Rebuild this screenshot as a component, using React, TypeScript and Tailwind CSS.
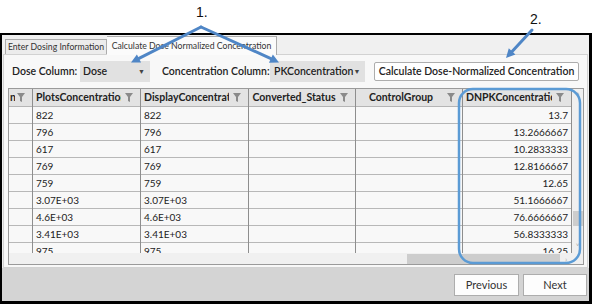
import React from "react";

const Funnel = () => (
  <svg width="8" height="9" viewBox="0 0 8 9" className="shrink-0">
    <path d="M0 0 H8 L5 4 V9 L3 8 V4 Z" fill="#8a8a8a" />
  </svg>
);

const rowsA = ["822", "796", "617", "769", "759", "3.07E+03", "4.6E+03", "3.41E+03", "975"];
const rowsB = ["13.7", "13.2666667", "10.2833333", "12.8166667", "12.65", "51.1666667", "76.6666667", "56.8333333", "16.25"];

const cols = [
  { w: "w-[24px]", label: "n", center: false },
  { w: "w-[108px]", label: "PlotsConcentration", center: false },
  { w: "w-[108px]", label: "DisplayConcentration", center: false },
  { w: "w-[107px]", label: "Converted_Status", center: true },
  { w: "w-[107px]", label: "ControlGroup", center: true },
  { w: "w-[109px]", label: "DNPKConcentration", center: false },
];

export default function App() {
  return (
    <div className="relative w-[592px] h-[304px] bg-white overflow-hidden font-['Lato',sans-serif] text-[#222]">
      <div className="h-[33px]" />
      <div className="h-[271px] border-l-2 border-t-2 border-r-[3px] border-b-[3px] border-black bg-[#f0f0f0] flex flex-col">
        {/* tab strip */}
        <div className="h-[19px] flex items-end pl-[3px] shrink-0">
          <div className="h-[15px] w-[102px] border border-b-0 border-[#acacac] bg-[#ececec] flex items-center justify-center whitespace-nowrap text-[8.7px] text-[#333]">
            Enter Dosing Information
          </div>
          <div className="h-[19px] w-[170px] border border-b-0 border-l-0 border-[#acacac] bg-[#fbfbfb] flex items-center justify-center whitespace-nowrap text-[8.7px] text-[#333] relative top-[1px]">
            Calculate Dose Normalized Concentration
          </div>
        </div>
        {/* panel */}
        <div className="h-[214px] mx-[1px] border border-[#d2d2d2] bg-[#f8f8f8] flex flex-col shrink-0">
          <div className="h-[33px] flex items-center pl-[8px] text-[10.5px] font-semibold">
            <span className="w-[68px] whitespace-nowrap">Dose Column:</span>
            <div className="w-[70px] h-[21px] bg-[#e1e1e1] flex items-center justify-between pl-[3px] pr-[5px]">
              <span>Dose</span>
              <span className="text-[7px] text-[#444]">▼</span>
            </div>
            <span className="ml-[12px] w-[108px] whitespace-nowrap">Concentration Column:</span>
            <div className="w-[95px] h-[21px] bg-[#e1e1e1] flex items-center justify-between pl-[4px] pr-[5px]">
              <span>PKConcentration</span>
              <span className="text-[7px] text-[#444]">▼</span>
            </div>
            <div className="ml-[9px] w-[205px] h-[19px] border border-[#adadad] rounded-[2px] bg-white flex items-center justify-center whitespace-nowrap">
              Calculate Dose-Normalized Concentration
            </div>
          </div>
          {/* grid */}
          <div className="ml-[4px] w-[576px] h-[177px] border border-[#9a9a9a] bg-[#f8f8f8] flex flex-col">
            <div className="flex h-[164px]">
              <div className="flex">
                {cols.map((c, ci) => (
                  <div key={ci} className={`${c.w} flex flex-col border-r border-[#8e8e8e] overflow-hidden`}>
                    <div className={`h-[18px] shrink-0 bg-[#e3e3e3] border-b border-[#b5b5b5] flex items-center ${ci === 0 ? "pl-[1px] gap-[2px]" : "pl-[3px] gap-[4px]"} pr-[7px]`}>
                      <div className={`flex-1 overflow-hidden whitespace-nowrap text-[10.5px] font-bold ${c.center ? "text-center" : ""}`}>
                        {c.label}
                      </div>
                      <Funnel />
                    </div>
                    {rowsA.map((v, ri) => (
                      <div key={ri} className="h-[17px] shrink-0 border-b border-[#b8b8b8] flex items-center px-[3px] text-[10px] whitespace-nowrap">
                        {ci === 1 || ci === 2 ? v : ci === 5 ? <span className="ml-auto">{rowsB[ri]}</span> : ""}
                      </div>
                    ))}
                  </div>
                ))}
              </div>
              <div className="w-[11px] bg-[#f0f0f0] flex flex-col items-center">
                <span className="mt-[2px] text-[8px] leading-none text-[#888]">˄</span>
                <div className="mt-[112px] w-[10px] h-[15px] bg-[#cdcdcd]" />
                <span className="mt-[16px] text-[8px] leading-none text-[#aaa]">˅</span>
              </div>
            </div>
            <div className="h-[11px] bg-[#f0f0f0] flex items-center">
              <div className="ml-[398px] w-[153px] h-[10px] bg-[#cdcdcd]" />
              <span className="ml-[5px] text-[8px] leading-none text-[#aaa]">›</span>
            </div>
          </div>
        </div>
        {/* footer */}
        <div className="flex-1 bg-[#d4d4d4] flex items-center justify-end gap-[4px] pr-[2px] pt-[1px]">
          <div className="w-[65px] h-[22px] border border-[#adadad] bg-[#fdfdfd] flex items-center justify-center text-[11px] text-[#333]">
            Previous
          </div>
          <div className="w-[64px] h-[22px] border border-[#adadad] bg-[#fdfdfd] flex items-center justify-center text-[11px] text-[#333]">
            Next
          </div>
        </div>
      </div>

      {/* annotations */}
      <span className="absolute left-[196px] top-[5px] text-[14px] leading-none font-['Liberation_Sans',sans-serif] text-[#111]">1.</span>
      <span className="absolute left-[530px] top-[12px] text-[14px] leading-none font-['Liberation_Sans',sans-serif] text-[#111]">2.</span>
      <svg className="absolute left-0 top-0 pointer-events-none" width="592" height="304" viewBox="0 0 592 304">
        <g stroke="#4f86c6" strokeWidth="3" fill="none" strokeLinecap="round">
          <line x1="201" y1="27" x2="139" y2="58.4" />
          <line x1="201" y1="27" x2="270.9" y2="58.6" />
          <line x1="532" y1="30" x2="512.1" y2="51.4" />
        </g>
        <g fill="#4f86c6">
          <polygon points="131,62.5 141.1,62.4 136.9,54.4" />
          <polygon points="279,62.5 268.95,62.65 272.84,54.55" />
          <polygon points="506,58 515.4,54.5 508.8,48.3" />
        </g>
        <rect x="459" y="89" width="121" height="174" rx="14" ry="14" fill="none" stroke="#5b9bd5" strokeWidth="2.5" />
      </svg>
    </div>
  );
}
